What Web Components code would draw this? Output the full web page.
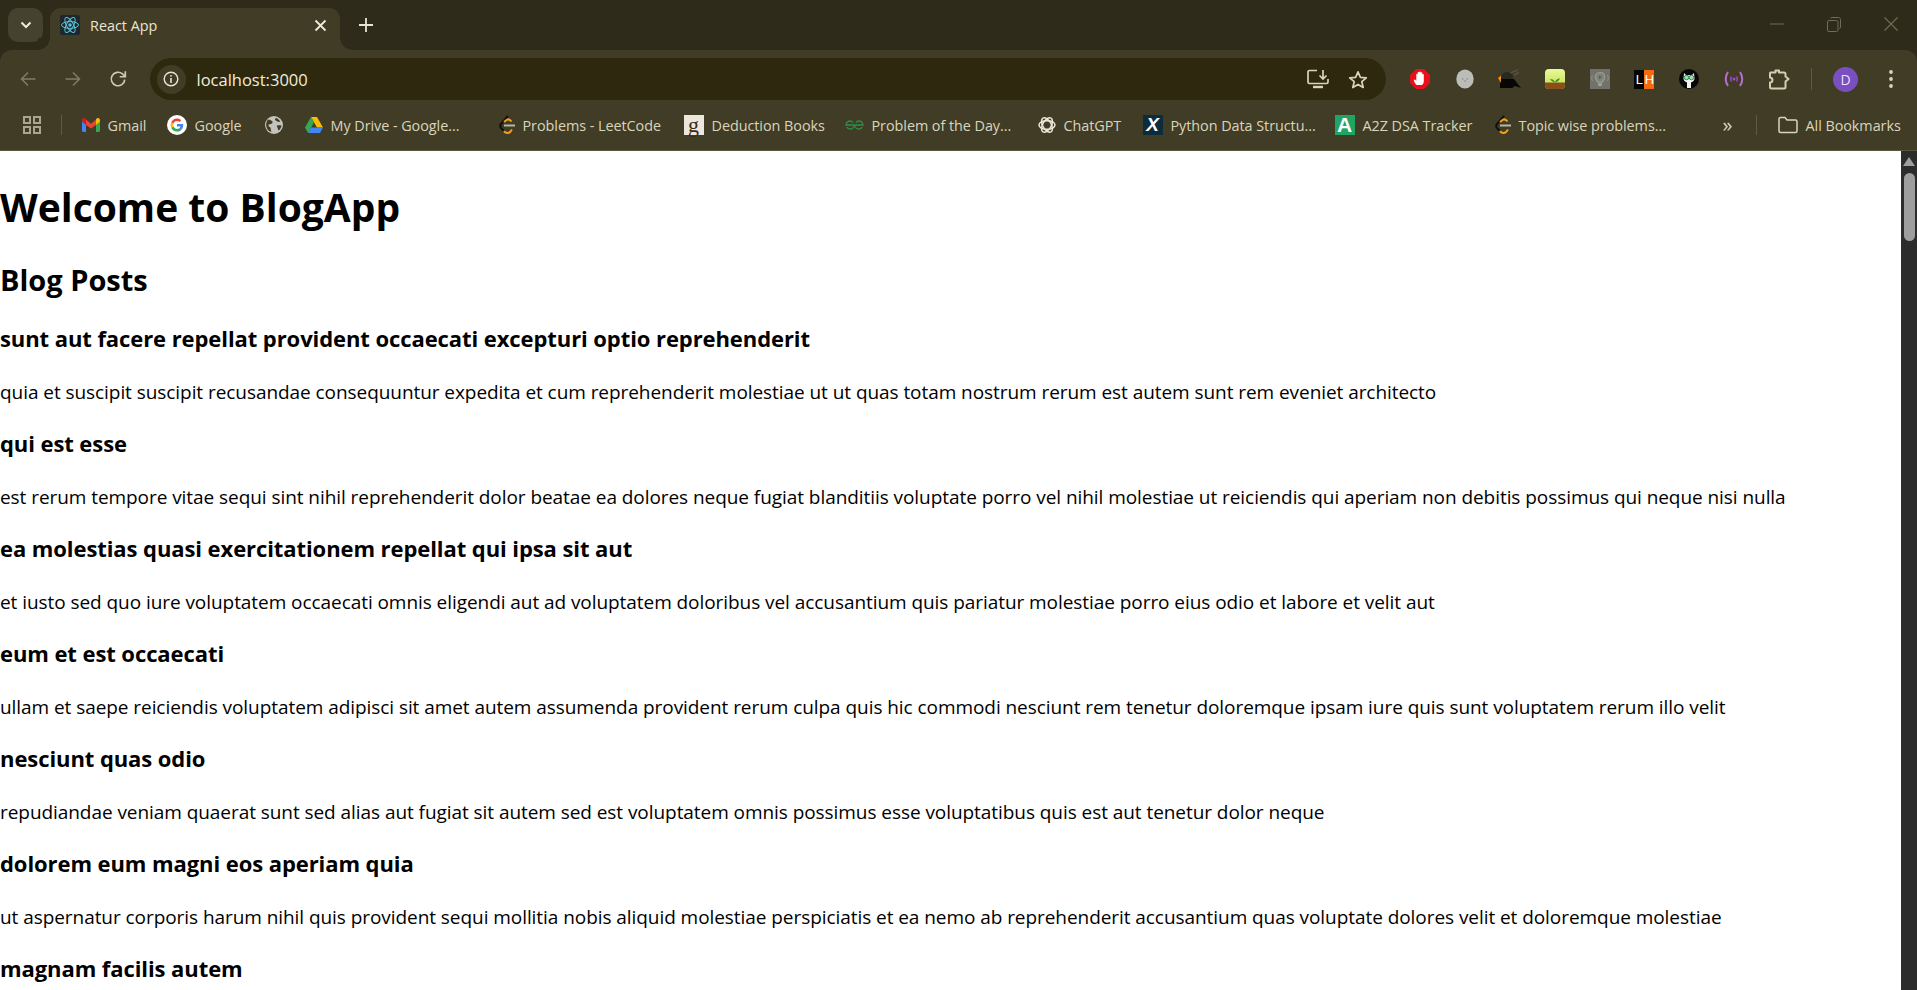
<!DOCTYPE html>
<html lang="en">
<head>
<meta charset="utf-8">
<title>React App</title>
<style>
	html, body {
		margin: 0;
		height: 100%;
		overflow: hidden;
		background: #2e2b1a;
		font-family: "Open Sans", "Noto Sans", "Liberation Sans", sans-serif;
	}
	body {
		display: flex;
		flex-direction: column;
	}
</style>
</head>
<body>
	<chrome-tabstrip></chrome-tabstrip>
	<chrome-toolbar></chrome-toolbar>
	<chrome-bookmarks></chrome-bookmarks>
	<page-view>
		<h-one>Welcome to BlogApp</h-one>
		<h-two>Blog Posts</h-two>
		<blog-post title="sunt aut facere repellat provident occaecati excepturi optio reprehenderit">quia et suscipit suscipit recusandae consequuntur expedita et cum reprehenderit molestiae ut ut quas totam nostrum rerum est autem sunt rem eveniet architecto</blog-post>
		<blog-post title="qui est esse">est rerum tempore vitae sequi sint nihil reprehenderit dolor beatae ea dolores neque fugiat blanditiis voluptate porro vel nihil molestiae ut reiciendis qui aperiam non debitis possimus qui neque nisi nulla</blog-post>
		<blog-post title="ea molestias quasi exercitationem repellat qui ipsa sit aut">et iusto sed quo iure voluptatem occaecati omnis eligendi aut ad voluptatem doloribus vel accusantium quis pariatur molestiae porro eius odio et labore et velit aut</blog-post>
		<blog-post title="eum et est occaecati">ullam et saepe reiciendis voluptatem adipisci sit amet autem assumenda provident rerum culpa quis hic commodi nesciunt rem tenetur doloremque ipsam iure quis sunt voluptatem rerum illo velit</blog-post>
		<blog-post title="nesciunt quas odio">repudiandae veniam quaerat sunt sed alias aut fugiat sit autem sed est voluptatem omnis possimus esse voluptatibus quis est aut tenetur dolor neque</blog-post>
		<blog-post title="dolorem eum magni eos aperiam quia">ut aspernatur corporis harum nihil quis provident sequi mollitia nobis aliquid molestiae perspiciatis et ea nemo ab reprehenderit accusantium quas voluptate dolores velit et doloremque molestiae</blog-post>
		<blog-post title="magnam facilis autem"></blog-post>
	</page-view>

<script>
/**
 * Dummy HTML tag function for syntax highlighters.
 */
const html = (x, ...v) => String.raw(x, ...v);

const FRAME = "#2e2b1a";
const BAR = "#413c25";

/** Base class: clones a template string into an open shadow root. */
class ShadowElement extends HTMLElement {
	constructor(markup) {
		super();
		const template = document.createElement("template");
		template.innerHTML = markup;
		this.attachShadow({mode: "open"}).appendChild(template.content.cloneNode(true));
	}
}

const icons = {
	react: html`<svg width="20" height="20" viewBox="0 0 20 20"><rect width="20" height="20" rx="2" fill="#20272c"/><g fill="none" stroke="#58c4dc"><ellipse cx="10" cy="10" rx="8.5" ry="3.4"/><ellipse cx="10" cy="10" rx="8.5" ry="3.4" transform="rotate(60 10 10)"/><ellipse cx="10" cy="10" rx="8.5" ry="3.4" transform="rotate(120 10 10)"/></g><circle cx="10" cy="10" r="1.7" fill="#58c4dc"/></svg>`,
	apps: html`<svg width="18" height="18" viewBox="0 0 18 18" fill="none" stroke="#a9a690" stroke-width="2"><rect x="1" y="1" width="6" height="6"/><rect x="11" y="1" width="6" height="6"/><rect x="1" y="11" width="6" height="6"/><rect x="11" y="11" width="6" height="6"/></svg>`,
	gmail: html`<svg width="18" height="14" viewBox="0 0 18 14"><path d="M0 2.2V12.6C0 13.4.6 14 1.3 14H4V6.5Z" fill="#4285f4"/><path d="M14 14h2.7c.7 0 1.3-.6 1.3-1.4V2.2L14 6.5Z" fill="#34a853"/><path d="M4 7V1.5L9 5.8 14 1.5V7L9 10.5Z" fill="#ea4335"/><path d="M0 2.2C0 .5 1.9-.5 3.2.5L4 1.2V7L0 3.6Z" fill="#c5221f"/><path d="M18 2.2C18 .5 16.1-.5 14.8.5L14 1.2V7L18 3.6Z" fill="#fbbc04"/></svg>`,
	google: html`<svg width="20" height="20" viewBox="0 0 20 20"><circle cx="10" cy="10" r="10" fill="#fff"/><path d="M16.2 10.2c0-.5 0-.9-.1-1.3H10v2.5h3.5c-.2.8-.6 1.5-1.3 2l2 1.6c1.2-1.1 2-2.8 2-4.8Z" fill="#4285f4"/><path d="M10 16.5c1.7 0 3.2-.6 4.2-1.6l-2-1.6c-.6.4-1.3.6-2.2.6-1.7 0-3.1-1.1-3.6-2.6l-2.1 1.6c1 2.1 3.2 3.6 5.7 3.6Z" fill="#34a853"/><path d="M6.4 11.300c-.3-.8-.3-1.800 0-2.600L4.300 7.100c-.9 1.800-.9 4 0 5.800Z" fill="#fbbc04"/><path d="M10 6.100c.9 0 1.800.3 2.400.9l1.800-1.800C13.100 4.200 11.700 3.500 10 3.500c-2.500 0-4.700 1.500-5.700 3.600l2.100 1.600C6.900 7.200 8.300 6.100 10 6.100Z" fill="#ea4335"/></svg>`,
	globe: html`<svg width="18" height="18" viewBox="0 0 18 18"><circle cx="9" cy="9" r="9" fill="#c4c3bd"/><path d="M3 3.500C5 4 6.500 4 7.500 5.500 8 6.500 7 7.500 6 8 5 8.500 4 8 3.500 9 3 10 4.500 11 5.500 11.500 6 12.500 5.500 14 6.500 16 4 15.500 1.500 13 1.200 9.500 1.100 7 1.800 5 3 3.500ZM11 2c2 .5 3.500 2 4.300 3.500-1 .5-2.300.5-3 0-.7-.8-2-.9-2.300-1.800C9.800 3 10.500 2.500 11 2ZM12 9.500c1.500-.5 3-.5 4.500 0-.2 2-1.200 3.800-2.800 5-.9-.5-.7-1.700-1-2.500-.4-.8-1.200-1.800-.7-2.500Z" fill="#413c25"/></svg>`,
	drive: html`<svg width="18" height="16" viewBox="0 0 18 16"><path d="M6 0h6l6 10.500h-6Z" fill="#fbbc04"/><path d="M6 0 0 10.500l3 5.500 6-10.500Z" fill="#34a853"/><path d="M3 16h12l3-5.500H6Z" fill="#4285f4"/></svg>`,
	leetcode: html`<svg width="17" height="20" viewBox="0 0 17 20" fill="none" stroke-width="2"><path d="M10 1 3 9C2 10.200 2 11.800 3 13L6 16" stroke="#111"/><path d="M6 7 8.500 5C10 4 12 4.500 13.500 6.500" stroke="#f0a21e"/><path d="M6 16C7.500 18.500 10.500 18.500 12 17L14 14.500" stroke="#f0a21e"/><path d="M6 10.500H17" stroke="#b9b7a8"/></svg>`,
	gfg: html`<svg width="19" height="10" viewBox="0 0 19 10" fill="none" stroke="#2f8d46" stroke-width="1.3"><path d="M9.500 5H1C1.500 2.500 3 1 5 1 6.500 1 7.500 1.800 8 2.800M9.500 5C9.300 7.500 7 9 5 9 3.500 9 2.300 8.200 1.700 7"/><path d="M9.500 5H18C17.500 2.500 16 1 14 1 12.500 1 11.500 1.800 11 2.800M9.500 5C9.700 7.500 12 9 14 9 15.500 9 16.700 8.200 17.300 7"/></svg>`,
	chatgpt: html`<svg width="18" height="18" viewBox="0 0 18 18" fill="none" stroke="#ebe8da" stroke-width="1.5"><ellipse cx="9" cy="9" rx="8" ry="4.3"/><ellipse cx="9" cy="9" rx="8" ry="4.3" transform="rotate(60 9 9)"/><ellipse cx="9" cy="9" rx="8" ry="4.3" transform="rotate(120 9 9)"/></svg>`,
	folder: html`<svg width="20" height="18" viewBox="0 0 20 18" fill="none" stroke="#d9d5bd" stroke-width="1.5"><path d="M1 15V3C1 2 1.700 1.500 2.500 1.500H7L9 4H17.500C18.400 4 19 4.600 19 5.500V15C19 15.900 18.400 16.500 17.500 16.500H2.500C1.700 16.500 1 15.900 1 15Z"/></svg>`,
	back: html`<svg width="16" height="16" viewBox="0 0 16 16" fill="none" stroke="#807d66" stroke-width="1.5"><path d="M15.500 8H1.500M8 1.500 1.500 8 8 14.500"/></svg>`,
	forward: html`<svg width="16" height="16" viewBox="0 0 16 16" fill="none" stroke="#807d66" stroke-width="1.5"><path d="M.5 8H14.500M8 1.500 14.500 8 8 14.500"/></svg>`,
	reload: html`<svg width="18" height="18" viewBox="0 0 16 16" fill="none" stroke="#cfcbb3" stroke-width="1.5"><path d="M14 8.500A6 6 0 1 1 12 3.500L14.500 5.800"/><path d="M14.500 1V6H9.500"/></svg>`,
	install: html`<svg width="22" height="20" viewBox="0 0 22 20" fill="none" stroke="#d9d5bd" stroke-width="1.7"><path d="M10 1.500H2.500C1.600 1.500 1 2.100 1 3V13C1 13.900 1.600 14.500 2.500 14.500H19.500C20.400 14.500 21 13.900 21 13V10"/><path d="M6 18H16" stroke-width="2.4"/><path d="M16 1V9.500M12.500 6.500 16 10 19.500 6.500"/></svg>`,
	star: html`<svg width="20" height="19" viewBox="0 0 20 19" fill="none" stroke="#d9d5bd" stroke-width="1.7" stroke-linejoin="round"><path d="M10 1.800 12.400 7.300 18.300 7.800 13.800 11.700 15.200 17.500 10 14.400 4.800 17.500 6.200 11.700 1.700 7.800 7.600 7.300Z"/></svg>`,
	adblock: html`<svg width="20" height="20" viewBox="0 0 20 20"><path d="M6 0H14L20 6V14L14 20H6L0 14V6Z" fill="#e8101c"/><path d="M6.500 16C5 14.500 4 12.500 3.800 11L5 10.500 6.300 11.800V5.500C6.300 4.500 7.500 4.500 7.700 5.500V3.800C7.700 2.800 9.100 2.800 9.200 3.800V3.200C9.200 2.200 10.700 2.200 10.800 3.200V4C10.900 3 12.300 3 12.400 4V5.500C12.500 4.800 13.800 4.800 13.800 5.800V12C13.800 14 13 15.200 12 16Z" fill="#fff"/></svg>`,
	blob: html`<svg width="18" height="20" viewBox="0 0 18 20"><ellipse cx="9" cy="10" rx="8.7" ry="9.5" fill="#bcbcb9"/><circle cx="6.800" cy="10" r=".8" fill="#85857f"/><circle cx="11.200" cy="10" r=".8" fill="#85857f"/><path d="M8 12h2" stroke="#8f8f8a"/></svg>`,
	kettle: html`<svg width="24" height="20" viewBox="0 0 24 20"><path d="M3 9C3 5 6 3 10 3 13 3 15 5 15 9V11H3Z" fill="#2a2920"/><path d="M2 10H16L19 14 23 19 17 17 14 19H2Z" fill="#060606"/><path d="M0 9 3 6.500V14Z" fill="#f28c18"/><path d="M12 4 20 1M16 6 21 3.500" stroke="#55523f" stroke-width="1.6"/></svg>`,
	citrus: html`<svg width="20" height="20" viewBox="0 0 20 20"><defs><linearGradient id="cg" x1="0" y1="0" x2="0" y2="1"><stop offset="0" stop-color="#ecf89a"/><stop offset="1" stop-color="#b9e04e"/></linearGradient></defs><rect width="20" height="20" rx="4" fill="url(#cg)"/><path d="M0 13.500H20V16A4 4 0 0 1 16 20H4A4 4 0 0 1 0 16Z" fill="#8a4f18"/><path d="M10 13.500C9.500 11 7.500 10 5 10 6 12 8 13 10 13.500ZM10 13.500C10.500 11 12.500 9.500 15 9.500 14 12 12 13 10 13.500Z" fill="#3f8f22"/></svg>`,
	bulb: html`<svg width="20" height="20" viewBox="0 0 20 20"><rect width="20" height="20" fill="#72726c"/><path d="M10 3.500C7 3.500 5.300 5.600 5.300 8.200 5.300 10.300 6.800 11.300 7.500 13H12.500C13.200 11.300 14.700 10.300 14.700 8.200 14.700 5.600 13 3.500 10 3.500Z" fill="#82827c" stroke="#9d9d97" stroke-width="1.2"/><rect x="8" y="14" width="4" height="3" fill="#9d9d97"/><path d="M8.800 6.200 12 8.200 8.800 10.200Z" fill="#5f5f5a"/><path d="M2.500 6C1.500 8 1.500 10 2.500 12M17.500 6C18.500 8 18.500 10 17.500 12" fill="none" stroke="#93938d"/></svg>`,
	cat: html`<svg width="20" height="20" viewBox="0 0 20 20"><circle cx="10" cy="10" r="10" fill="#060606"/><path d="M5 4 7 6H13L15 4 15.500 10C15 12.500 13 13 12 13.500V19H8V13.500C7 13 5 12.500 4.500 10Z" fill="#f2f2ee"/><circle cx="7.500" cy="8.500" r="2.300" fill="#a6d8b8" stroke="#2f9157"/><circle cx="12.500" cy="8.500" r="2.300" fill="#a6d8b8" stroke="#2f9157"/></svg>`,
	waves: html`<svg width="20" height="18" viewBox="0 0 20 18" fill="none" stroke-width="2"><path d="M4 2C1 6 1 12 4 16M16 2C19 6 19 12 16 16" stroke="#b46fd0"/><path d="M7.500 6.500C6.500 8 6.500 10 7.500 11.500M12.500 6.500C13.500 8 13.500 10 12.500 11.500" stroke="#9a42bb" stroke-width="1.5"/><circle cx="10" cy="9" r="1.500" fill="#b040d4"/></svg>`,
	puzzle: html`<svg width="22" height="22" viewBox="0 0 22 22" fill="none" stroke="#d3cfb0" stroke-width="2" stroke-linejoin="round"><path d="M2.500 4.500H7.500V2.500H11V4.500H16C17 4.500 17.500 5 17.500 6V8.500L20.500 11 17.500 13.500V19C17.500 20 17 20.500 16 20.500H3.500C2.500 20.500 2 20 2 19V14.500C5 14.500 5.500 10 2 9.500V5.500C2 5 2.200 4.500 2.500 4.500Z"/></svg>`,
	min: html`<svg width="14" height="2" viewBox="0 0 14 2"><path d="M0 1H14" stroke="#6f6d5a"/></svg>`,
	restore: html`<svg width="14" height="15" viewBox="0 0 14 15" fill="none" stroke="#6f6d5a"><rect x=".5" y="3.500" width="10.500" height="11" rx="1.500"/><path d="M3.500 1.500C3.700 .8 4.200 .5 5 .5H11.500C12.700 .5 13.500 1.300 13.500 2.500V10C13.500 10.800 13 11.300 12.500 11.500"/></svg>`,
	close: html`<svg width="14" height="14" viewBox="0 0 14 14"><path d="M.5.5 13.500 13.500M13.500.5.500 13.500" stroke="#6f6d5a" stroke-width="1.1"/></svg>`,
};

class ChromeTabstrip extends ShadowElement {
	constructor() {
		super(html`
			<style>
				:host {
					display: flex;
					flex: none;
					height: 50px;
					align-items: flex-end;
					padding-left: 8px;
					background: ${FRAME};
				}
				.list {
					align-self: flex-start;
					margin-top: 8px;
					width: 35px;
					height: 34px;
					border-radius: 10px;
					background: #45432f;
					display: grid;
					place-items: center;
				}
				.tab {
					position: relative;
					box-sizing: border-box;
					width: 290px;
					height: 42px;
					margin-left: 7px;
					padding: 0 13px 8px 10px;
					display: flex;
					align-items: center;
					background: ${BAR};
					border-radius: 11px 11px 0 0;
					color: #e8e5d2;
					font-size: 14.4px;
				}
				.tab::before, .tab::after {
					content: "";
					position: absolute;
					bottom: 0;
					width: 12px;
					height: 12px;
				}
				.tab::before {
					left: -12px;
					background: radial-gradient(circle at 0 0, ${FRAME} 11.5px, ${BAR} 12px);
				}
				.tab::after {
					right: -12px;
					background: radial-gradient(circle at 100% 0, ${FRAME} 11.5px, ${BAR} 12px);
				}
				.title {
					margin-left: 10px;
					flex: 1;
				}
				.new {
					width: 36px;
					margin-left: 8px;
					align-self: center;
					display: grid;
					place-items: center;
				}
				.controls {
					margin-left: auto;
					align-self: flex-start;
					height: 48px;
					display: flex;
					gap: 5px;
				}
				.controls span {
					width: 52px;
					display: grid;
					place-items: center;
				}
			</style>
			<div class="list">
				<svg width="12" height="8" viewBox="0 0 12 8" fill="none" stroke="#eeeadb" stroke-width="2"><path d="M1.500 1.500 6 6 10.500 1.500"/></svg>
			</div>
			<div class="tab">
				${icons.react}
				<span class="title">React App</span>
				<svg width="13" height="13" viewBox="0 0 13 13"><path d="M1.500 1.500 11.500 11.500M11.500 1.500 1.500 11.500" stroke="#eeeadb" stroke-width="1.8"/></svg>
			</div>
			<div class="new">
				<svg width="14" height="14" viewBox="0 0 14 14"><path d="M7 0V14M0 7H14" stroke="#e8e5d2" stroke-width="1.8"/></svg>
			</div>
			<div class="controls">
				<span>${icons.min}</span><span>${icons.restore}</span><span>${icons.close}</span>
			</div>
		`);
	}
}

class ChromeToolbar extends ShadowElement {
	constructor() {
		const ext = ["adblock", "blob", "kettle", "citrus", "bulb", "lh", "cat", "waves", "puzzle"];
		super(html`
			<style>
				:host {
					display: flex;
					flex: none;
					height: 50px;
					box-sizing: border-box;
					align-items: flex-start;
					padding: 8px 0 0 5px;
					background: ${BAR};
					border-radius: 12px 12px 0 0;
				}
				.btn {
					width: 45px;
					height: 42px;
					display: grid;
					place-items: center;
					flex: none;
				}
				.omni {
					flex: none;
					box-sizing: border-box;
					width: 1236px;
					height: 42px;
					margin-left: 9.5px;
					padding: 0 8px 0 7px;
					display: flex;
					align-items: center;
					background: #2e280f;
					border-radius: 21px;
				}
				.info {
					width: 29px;
					height: 29px;
					border-radius: 50%;
					background: #413c25;
					display: grid;
					place-items: center;
				}
				.url {
					margin-left: 11px;
					flex: 1;
					font-size: 16.5px;
					color: #f1edda;
				}
				.omni .act {
					width: 39.5px;
					display: grid;
					place-items: center;
				}
				.exts {
					display: flex;
					margin-left: 12.5px;
				}
				.ext {
					width: 44.8px;
					height: 42px;
					display: grid;
					place-items: center;
				}
				.sep {
					flex: none;
					width: 1px;
					height: 22px;
					margin: 10px 11px 0 10px;
					background: #5f5b40;
				}
				.avatar {
					width: 25px;
					height: 25px;
					border-radius: 50%;
					background: #7a4fc0;
					color: #ecdffb;
					font-size: 14px;
					display: grid;
					place-items: center;
				}
				.lh {
					display: flex;
					width: 20px;
					height: 19px;
					font: 13px/19px "Liberation Sans", sans-serif;
					color: #fff;
					text-align: center;
				}
				.lh b {
					flex: 1;
					font-weight: 400;
					background: #050505;
				}
				.lh b + b {
					background: #f26b12;
				}
			</style>
			<div class="btn">${icons.back}</div>
			<div class="btn">${icons.forward}</div>
			<div class="btn">${icons.reload}</div>
			<div class="omni">
				<div class="info">
					<svg width="16" height="16" viewBox="0 0 16 16" fill="none" stroke="#e8e5d2" stroke-width="1.4"><circle cx="8" cy="8" r="6.8"/><path d="M8 7V12" stroke-width="1.6"/><circle cx="8" cy="4.800" r=".9" fill="#e8e5d2" stroke="none"/></svg>
				</div>
				<span class="url">localhost:3000</span>
				<span class="act">${icons.install}</span>
				<span class="act">${icons.star}</span>
			</div>
			<div class="exts">
				${ext.map(name => name === "lh"
					? html`<div class="ext"><div class="lh"><b>L</b><b>H</b></div></div>`
					: html`<div class="ext">${icons[name]}</div>`).join("")}
			</div>
			<div class="sep"></div>
			<div class="btn"><div class="avatar">D</div></div>
			<div class="btn">
				<svg width="4" height="18" viewBox="0 0 4 18" fill="#d9d5bd"><circle cx="2" cy="2" r="1.9"/><circle cx="2" cy="9" r="1.9"/><circle cx="2" cy="16" r="1.9"/></svg>
			</div>
		`);
	}
}

class BookmarkItem extends ShadowElement {
	constructor() {
		super(html`
			<style>
				:host {
					display: flex;
					flex: none;
					align-items: center;
					white-space: nowrap;
					color: #d9d5bd;
					font-size: 14.4px;
					letter-spacing: -0.05px;
				}
				.icon {
					display: grid;
					place-items: center;
					flex: none;
					margin-right: 8px;
				}
			</style>
			<span class="icon"><slot name="icon"></slot></span>
			<slot></slot>
		`);
	}
	connectedCallback() {
		this.style.width = this.getAttribute("w") + "px";
	}
}

class ChromeBookmarks extends ShadowElement {
	constructor() {
		const square = (bg, color, text, font) =>
			html`<span style="width:20px;height:20px;background:${bg};color:${color};display:grid;place-items:center;font:${font}">${text}</span>`;
		const items = [
			[85, icons.gmail, "Gmail"],
			[98, icons.google, "Google"],
			[40, icons.globe, ""],
			[193, icons.drive, "My Drive - Google..."],
			[186, icons.leetcode, "Problems - LeetCode"],
			[161, square("#ece6dc", "#3b2a18", "g", "22px/18px 'Liberation Serif',serif"), "Deduction Books"],
			[193, icons.gfg, "Problem of the Day..."],
			[105, icons.chatgpt, "ChatGPT"],
			[192, square("#0b2c3a", "#fff", "X", "italic 700 19px/20px 'Liberation Sans',sans-serif"), "Python Data Structu..."],
			[159, square("#1fa463", "#fff", "A", "700 21px/20px 'Liberation Sans',sans-serif"), "A2Z DSA Tracker"],
			[229, icons.leetcode, "Topic wise problems..."],
		];
		super(html`
			<style>
				:host {
					display: flex;
					flex: none;
					height: 51px;
					box-sizing: border-box;
					align-items: center;
					padding: 0 0 0 23px;
					background: ${BAR};
					border-bottom: 1px solid #5a5740;
				}
				.sep {
					width: 1px;
					height: 20px;
					background: #5f5b40;
				}
				.apps {
					display: grid;
					width: 38px;
				}
				.first {
					margin: 0 19.5px 0 0;
				}
				.more {
					width: 33px;
					color: #d9d5bd;
					font-size: 20px;
					line-height: 20px;
				}
				.all {
					margin-left: 21px;
				}
			</style>
			<div class="apps">${icons.apps}</div>
			<div class="sep first"></div>
			${items.map(([w, icon, text]) => html`<bookmark-item w="${w}"><span slot="icon" style="display:grid">${icon}</span>${text}</bookmark-item>`).join("")}
			<div class="more">»</div>
			<div class="sep"></div>
			<bookmark-item class="all" w="130"><span slot="icon" style="display:grid">${icons.folder}</span>All Bookmarks</bookmark-item>
		`);
	}
}

class HOne extends ShadowElement {
	constructor() {
		super(html`
			<style>
				:host { display: block; margin: 29px 0 26.8px; font-size: 39px; line-height: 53px; font-weight: 700; }
			</style>
			<slot></slot>
		`);
	}
}

class HTwo extends ShadowElement {
	constructor() {
		super(html`
			<style>
				:host { display: block; margin: 24.9px 0 23px; font-size: 29px; line-height: 40px; font-weight: 700; }
			</style>
			<slot></slot>
		`);
	}
}

class BlogPost extends ShadowElement {
	constructor() {
		super(html`
			<style>
				:host { display: block; }
				h3 { margin: 21.5px 0 25.5px; font-size: 22px; letter-spacing: -0.08px; line-height: 31px; font-weight: 700; }
				p { margin: 21.5px 0; font-size: 19px; letter-spacing: -0.06px; line-height: 27px; }
			</style>
			<h3></h3>
			<p><slot></slot></p>
		`);
	}
	connectedCallback() {
		this.shadowRoot.querySelector("h3").textContent = this.getAttribute("title");
		this.removeAttribute("title");
	}
}

class PageView extends ShadowElement {
	constructor() {
		super(html`
			<style>
				:host {
					display: flex;
					flex: 1;
					min-height: 0;
					background: #fff;
					color: #000;
				}
				.content {
					flex: 1;
					min-width: 0;
					overflow: hidden;
				}
				.track {
					flex: none;
					width: 16px;
					background: #2c2c2c;
					display: flex;
					flex-direction: column;
					align-items: center;
				}
				.up {
					margin-top: 6px;
					width: 0;
					height: 0;
					border: solid transparent;
					border-width: 0 6.5px 9px;
					border-bottom-color: #9e9e9e;
				}
				.thumb {
					margin-top: 7px;
					width: 11px;
					height: 68px;
					border-radius: 6px;
					background: #9e9e9e;
				}
			</style>
			<div class="content"><slot></slot></div>
			<div class="track"><div class="up"></div><div class="thumb"></div></div>
		`);
	}
}

customElements.define("bookmark-item", BookmarkItem);
customElements.define("chrome-tabstrip", ChromeTabstrip);
customElements.define("chrome-toolbar", ChromeToolbar);
customElements.define("chrome-bookmarks", ChromeBookmarks);
customElements.define("h-one", HOne);
customElements.define("h-two", HTwo);
customElements.define("blog-post", BlogPost);
customElements.define("page-view", PageView);
</script>
</body>
</html>
